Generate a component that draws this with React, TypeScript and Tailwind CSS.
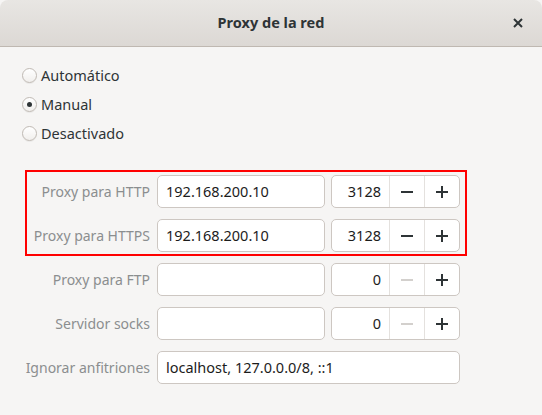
import React from 'react';

const font = { fontFamily: '"Noto Sans", "DejaVu Sans", sans-serif' };

const Radio = ({ label, checked }: { label: string; checked?: boolean }) => (
  <div className="flex items-center h-[29px]">
    <span className="w-[15px] h-[15px] rounded-full border border-[#c0bab4] bg-gradient-to-b from-white to-[#f1efed] flex items-center justify-center shadow-[0_1px_0_rgba(0,0,0,0.05)]">
      {checked && <span className="w-[5px] h-[5px] rounded-full bg-[#2e3436]" />}
    </span>
    <span className="ml-[4px] text-[14.5px] text-[#2e3436]">{label}</span>
  </div>
);

const Spin = ({ value, minusDisabled }: { value: string; minusDisabled?: boolean }) => (
  <div className="ml-[6px] w-[129px] h-full flex border border-[#cdc7c2] rounded-[5px] bg-white overflow-hidden">
    <div className="w-[57px] flex items-center justify-end pr-[8px] text-[14.5px] text-[#1c1c1c]">{value}</div>
    <div
      className={
        'w-[35px] border-l border-[#e4e1de] flex items-center justify-center ' +
        (minusDisabled ? 'text-[#d3d0cd]' : 'text-[#2e3436]')
      }
    >
      <svg width="12" height="12" viewBox="0 0 12 12">
        <rect x="0" y="5" width="12" height="2" fill="currentColor" />
      </svg>
    </div>
    <div className="flex-1 border-l border-[#e4e1de] flex items-center justify-center text-[#2e3436]">
      <svg width="12" height="12" viewBox="0 0 12 12">
        <rect x="0" y="5" width="12" height="2" fill="currentColor" />
        <rect x="5" y="0" width="2" height="12" fill="currentColor" />
      </svg>
    </div>
  </div>
);

const Row = ({
  label,
  text,
  port,
  minusDisabled,
  wide,
}: {
  label: string;
  text: string;
  port?: string;
  minusDisabled?: boolean;
  wide?: boolean;
}) => (
  <div className="flex items-center h-[33px]">
    <div className="w-[150px] text-right text-[14px] text-[#8b8e8f] whitespace-nowrap">{label}</div>
    <div
      className={
        'ml-[7px] h-full flex items-center px-[8px] border border-[#cdc7c2] rounded-[5px] bg-white text-[14.5px] text-[#1c1c1c] ' +
        (wide ? 'w-[303px]' : 'w-[168px]')
      }
    >
      {text}
    </div>
    {port !== undefined && <Spin value={port} minusDisabled={minusDisabled} />}
  </div>
);

export default function App() {
  return (
    <div className="w-[542px] h-[415px] bg-[#f6f5f4] relative overflow-hidden" style={font}>
      <div className="h-[47px] rounded-t-[8px] bg-gradient-to-b from-[#e8e6e3] to-[#dcd8d4] border-b border-[#bfb8b1] flex items-center justify-center relative">
        <span className="text-[14.5px] font-bold text-[#2e3436]">Proxy de la red</span>
        <span className="absolute right-[19px] top-[18px] text-[#2e3436]">
          <svg width="10" height="10" viewBox="0 0 10 10">
            <path d="M1 1 L9 9 M9 1 L1 9" stroke="currentColor" strokeWidth="2" />
          </svg>
        </span>
      </div>

      <div className="pl-[22px] pt-[14px]">
        <Radio label="Automático" />
        <Radio label="Manual" checked />
        <Radio label="Desactivado" />
      </div>

      <div className="mt-[27px] flex flex-col gap-[11px]">
        <Row label="Proxy para HTTP" text="192.168.200.10" port="3128" />
        <Row label="Proxy para HTTPS" text="192.168.200.10" port="3128" />
        <Row label="Proxy para FTP" text="" port="0" minusDisabled />
        <Row label="Servidor socks" text="" port="0" minusDisabled />
        <Row label="Ignorar anfitriones" text="localhost, 127.0.0.0/8, ::1" wide />
      </div>

      <div className="absolute left-[25px] top-[170px] w-[442px] h-[86px] border-2 border-[#ff0000] pointer-events-none" />
    </div>
  );
}
